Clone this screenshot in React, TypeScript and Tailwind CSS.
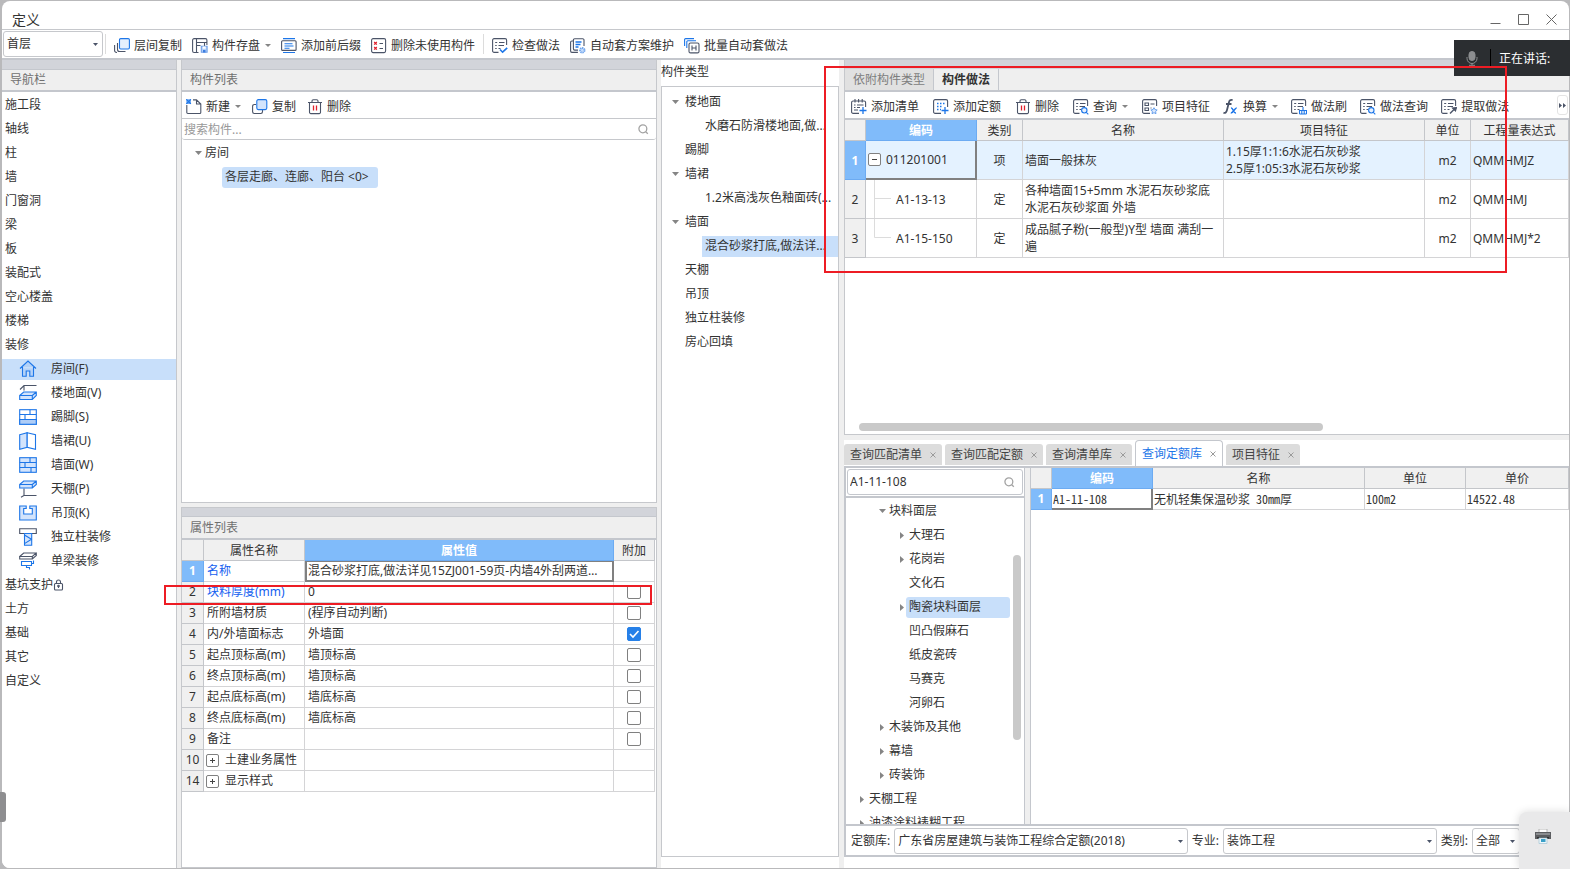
import type { ReactNode } from "react";

const D = "#4b5468";
const B = "#1d76e8";
const L = "#d3e4fc";

function Svg({ children, w = 16, h = 16 }: { children: ReactNode; w?: number; h?: number }) {
  return (
    <svg width={w} height={h} viewBox={`0 0 ${w} ${h}`} fill="none" stroke={D} strokeWidth="1.1" className="shrink-0" aria-hidden="true">
      {children}
    </svg>
  );
}

const Down = () => (
  <svg width="7" height="4" viewBox="0 0 7 4" className="shrink-0" aria-hidden="true">
    <path d="M0 0h7L3.5 4z" fill="#858585" />
  </svg>
);
const Right = () => (
  <svg width="4" height="7" viewBox="0 0 4 7" className="shrink-0" aria-hidden="true">
    <path d="M0 0v7L4 3.5z" fill="#858585" />
  </svg>
);
const SearchIcon = () => (
  <svg width="11" height="11" viewBox="0 0 12 12" fill="none" stroke="#a3a3a3" strokeWidth="1.4" className="shrink-0" aria-hidden="true">
    <circle cx="5.3" cy="5.3" r="4.3" />
    <path d="M8.4 8.4l2.3 2.3" />
  </svg>
);

const CopyFloors = () => (
  <Svg>
    <path d="M.6 7v5.500a2 2 0 0 0 2 2H3M3.5 5v6.500a2 2 0 0 0 2 2h6" />
    <rect x="5.500" y=".6" width="9.900" height="10.400" rx="1.200" fill="#e4effd" stroke={B} />
  </Svg>
);
const SaveComponent = () => (
  <Svg>
    <path d="M6.500 14.500H2.100A1.500 1.500 0 0 1 .600 13V2.100A1.500 1.500 0 0 1 2.100.600h11.300a1.500 1.500 0 0 1 1.500 1.500V7M4.500.600v13.900M4.500 4.500h10.400M4.500 7.500h4M12.500 4.500V8" />
    <path d="M9.300 8.300h5.800v6H9.300z" fill="#b5d2f9" stroke="#6f9fe8" />
    <path d="M10.700 8.500h3v2.300h-3z" fill="#fff" stroke="none" />
    <path d="M11 12h2.500v2.500H11z" fill="#3c7de0" stroke="none" />
  </Svg>
);
const Affix = () => (
  <Svg>
    <path d="M2 .600h12M2 14.500h12" stroke={B} />
    <rect x=".600" y="2.800" width="14.500" height="9.600" rx="1" />
    <path d="M3.500 5.700h8M3.500 8h9M3.500 10.300h5" stroke={B} />
  </Svg>
);
const RemoveUnused = () => (
  <Svg>
    <rect x=".600" y=".600" width="14" height="14" rx="1.500" />
    <path d="M3.200 4l2.600 2.600m0-2.600L3.200 6.600M3.200 9l2.600 2.600m0-2.600l-2.600 2.600" stroke="#e0202c" strokeWidth="1.300" />
    <path d="M8.500 5.500H12M8.500 10.500H12" />
  </Svg>
);
const DocFrame = () => (
  <path d="M6.500 14.400H2.100A1.500 1.500 0 0 1 .600 12.900V2.100A1.500 1.500 0 0 1 2.100.600h11a1.500 1.500 0 0 1 1.500 1.500V7M3.200 4.500h2M7 4.500h5.500M3.200 7.500h1.500M6.500 7.500h5.500M3.200 10.500h1.500M6.500 10.500h2" />
);
const CheckDoc = () => (
  <Svg>
    <DocFrame />
    <path d="M8 11.500l2.600 2.700 4.600-4.400" stroke={B} strokeWidth="1.600" />
  </Svg>
);
const AutoPlan = () => (
  <Svg>
    <path d="M3 3H1.900A1.300 1.300 0 0 0 .600 4.300v8.800a1.300 1.300 0 0 0 1.300 1.300h6M3.400 10.800V2a1.300 1.300 0 0 1 1.300-1.300h8A1.300 1.300 0 0 1 14 2v6M3.400 10.800a1.300 1.300 0 0 0 1.300 1.300H8" />
    <path d="M5.500 4h6M5.500 6.500h5M5.500 9h3" stroke={B} strokeWidth="1.300" />
    <circle cx="12.300" cy="12.300" r="2.300" fill="#c5dcfb" stroke="#6ea3ec" strokeWidth="1.800" strokeDasharray="1.300 .600" />
  </Svg>
);
const Batch = () => (
  <Svg>
    <path d="M.600 8V1.600a1 1 0 0 1 1-1H10M2.800 10V3.800a1 1 0 0 1 1-1H12" stroke={B} />
    <rect x="5" y="5" width="10" height="9.900" rx="1.500" />
    <path d="M8 7.500v5M12 7.500v5M8 10h4" />
  </Svg>
);
const NewIcon = () => (
  <Svg>
    <path d="M.800 6v7.500a1 1 0 0 0 1 1h12a1 1 0 0 0 1-1V5L10.500.900H7M10.500.900V5h4.300" />
    <path d="M.300.300h4.600v4.600H.300z" fill="#6aa6f2" stroke="none" />
    <path d="M.300.300l4.600 4.600M4.900.300L.300 4.900" stroke={B} />
  </Svg>
);
const CopyIcon = () => (
  <Svg>
    <path d="M4 5.500H2.300A1.700 1.700 0 0 0 .600 7.200v5.600a1.700 1.700 0 0 0 1.700 1.700h6.500a1.700 1.700 0 0 0 1.700-1.700V11" />
    <rect x="4.800" y=".600" width="10" height="10" rx="1.500" fill={L} stroke={B} />
  </Svg>
);
const Trash = () => (
  <Svg>
    <path d="M1 3.500h14M5 3.300V2A1.300 1.300 0 0 1 6.300.700h3.400A1.300 1.300 0 0 1 11 2v1.300M2.500 3.500v9.800a1.300 1.300 0 0 0 1.300 1.300h8.400a1.300 1.300 0 0 0 1.300-1.300V3.500" />
    <path d="M6.500 6.500v5M9.500 6.500v5" stroke="#e0202c" strokeWidth="1.300" />
  </Svg>
);
const AddList = () => (
  <Svg>
    <path d="M8 14.400H2.100A1.500 1.500 0 0 1 .600 12.900V3.500A1.500 1.500 0 0 1 2.100 2h11a1.500 1.500 0 0 1 1.500 1.500V8M4 0v3.500M7.600 0v3.500M11.200 0v3.500M3 6h1.500M6 6h6.500M3 8.500h1.500M6 8.500h3M3 11h4" />
    <path d="M8.500 11.500h7M12 8v7" stroke={B} strokeWidth="1.300" />
  </Svg>
);
const AddQuota = () => (
  <Svg>
    <path d="M8 14.400H2.100A1.500 1.500 0 0 1 .600 12.900V2.100A1.500 1.500 0 0 1 2.100.600h11a1.500 1.500 0 0 1 1.500 1.500V8" />
    <path d="M4 4.500h9M4 7.500h6M4 10.500h4" stroke={B} strokeDasharray="1.500 1.500" strokeWidth="1.400" />
    <path d="M8.500 11.500h7M12 8v7" stroke={B} strokeWidth="1.300" />
  </Svg>
);
const QueryDoc = () => (
  <Svg>
    <DocFrame />
    <circle cx="11.300" cy="11.300" r="2.700" fill="#e4effd" stroke={B} />
    <path d="M13.300 13.300l2 2" stroke={B} />
  </Svg>
);
const Feature = () => (
  <Svg>
    <path d="M8 14.400H2.100A1.500 1.500 0 0 1 .600 12.900V2.100A1.500 1.500 0 0 1 2.100.600h11a1.500 1.500 0 0 1 1.500 1.500V7M3 4h3.500v2.500H3zM3 9h3.500v2.500H3zM8.500 5h4M8.500 9h1" />
    <path d="M12 8.700l1 1.900 2.200.4-1.600 1.500.4 2.200-2-1-2 1 .4-2.200-1.600-1.500 2.200-.4z" fill="#d8e7fc" stroke="#5b97ea" strokeWidth=".900" />
  </Svg>
);
const Fx = () => (
  <Svg>
    <path d="M.500 13.600c1.800.900 2.900-.300 3.500-2.600l1.900-7.500C6.400 1.500 7.300.400 9.600 1.200M3 5h5.500" strokeWidth="1.800" />
    <path d="M8 9c2.300-.500 2.200 5.500 5 5M13.700 8.900c-2-.300-3.400 5.400-5.900 5.100" stroke={B} strokeWidth="1.500" />
  </Svg>
);
const BrushDoc = () => (
  <Svg>
    <DocFrame />
    <path d="M8.500 15v-3.500h7V15M12 8v3.500M10.800 12v3M13.200 12v3M8.500 15h7" stroke={B} />
  </Svg>
);
const ExtractDoc = () => (
  <Svg>
    <DocFrame />
    <path d="M9 14.500l4-4" strokeWidth="1.500" />
    <path d="M11.500 9l3 3 1-3.500z" fill={D} />
  </Svg>
);

const HomeIcon = () => (
  <Svg w={18} h={18}>
    <path d="M1 8.500L9 1l8 7.500M3.500 7v9.300h3.700V11h3.600v5.300h3.700V7" fill="#b4d2f8" stroke={B} />
  </Svg>
);
const FloorIcon = () => (
  <Svg w={18} h={18}>
    <path d="M17.500 1.500H5L1 5.500M5 1.500v5" />
    <path d="M.700 11.500l4-3.500H17.300v3.500l-4 4H.700zM.700 11.500h12.600v4M13.300 11.500l4-3.500" fill={L} stroke={B} />
  </Svg>
);
const Bricks = ({ full }: { full?: boolean }) => (
  <Svg w={18} h={18}>
    <rect x=".700" y="1.700" width="16.600" height="14.600" fill={full ? L : "#fff"} stroke={B} />
    {!full && <path d="M.700 11.500h16.600v4.800H.700z" fill="#aecdf7" stroke={B} />}
    <path d={full ? "M.700 6.500h16.600M.700 11.500h16.600M11 1.700v4.800M6 6.500v5M12 11.500v4.800" : "M.700 6.500h16.600M.700 11.500h16.600M11 1.700v4.800M6 6.500v5"} stroke={B} />
  </Svg>
);
const Wainscot = () => (
  <Svg w={18} h={18}>
    <path d="M.700 2.700l7.500-2v14.600l-7.500 2z" fill={L} stroke={B} />
    <path d="M8.200.700l8.300 2v14.600l-8.300-2z" fill="#fff" stroke={B} />
  </Svg>
);
const CeilingIcon = () => (
  <Svg w={18} h={18}>
    <path d="M17.500 15.500H5M5 8.500v7l-3 1.700" />
    <path d="M.700 4.500l4-3.500H17.300v3.500l-4 3.500H.700zM.700 4.500h12.600V8M13.300 4.500l4-3.500" fill={L} stroke={B} />
  </Svg>
);
const SuspendIcon = () => (
  <Svg w={18} h={18}>
    <path d="M.700 2h6.500v2.500H4.700V10h8.600V4.500h-2.500V2h6.500v14H.700z" fill={L} stroke={B} />
  </Svg>
);
const ColumnIcon = () => (
  <Svg w={18} h={18}>
    <path d="M.700.800h16.600v4.700H.700z" fill="#fff" />
    <path d="M5.500 5.500h7.200v11.800H5.500zM5.500 7l7 4.300-7 4.300" fill={L} stroke={B} />
  </Svg>
);
const BeamIcon = () => (
  <Svg w={18} h={18}>
    <path d="M.700 4.500l4-3.500H17.300l-4 3.500zM.700 4.500V7h12.600l4-3.500V1M13.300 4.500V7" />
    <path d="M2.500 9.500h10v4h-10zM12.500 11.500h2v-3M7.500 13.500v2h3v2" stroke={B} />
  </Svg>
);

function Tool({ icon, text, menu }: { icon: ReactNode; text: string; menu?: boolean }) {
  return (
    <button type="button" className="flex shrink-0 items-center gap-1 whitespace-nowrap">
      {icon}
      <span>{text}</span>
      {menu && (
        <span className="pl-px">
          <svg width="6" height="3" viewBox="0 0 6 3" aria-hidden="true">
            <path d="M0 0h6L3 3z" fill="#858585" />
          </svg>
        </span>
      )}
    </button>
  );
}

function Drop({ label, value, className }: { label: string; value: string; className: string }) {
  return (
    <div className={`relative h-[26px] ${className}`}>
      <select aria-label={label} className="h-full w-full appearance-none rounded-[3px] border border-[#c6c8cc] bg-white pl-[3px] pr-4 text-xs text-[#333]">
        <option>{value}</option>
      </select>
      <svg width="5" height="3" viewBox="0 0 5 3" className="pointer-events-none absolute right-[5px] top-3" aria-hidden="true">
        <path d="M0 0h5L2.500 3z" fill="#4b5468" />
      </svg>
    </div>
  );
}

const navTop = ["施工段", "轴线", "柱", "墙", "门窗洞", "梁", "板", "装配式", "空心楼盖", "楼梯", "装修"];
const navSub: [ReactNode, string][] = [
  [<HomeIcon />, "房间(F)"],
  [<FloorIcon />, "楼地面(V)"],
  [<Bricks />, "踢脚(S)"],
  [<Wainscot />, "墙裙(U)"],
  [<Bricks full />, "墙面(W)"],
  [<CeilingIcon />, "天棚(P)"],
  [<SuspendIcon />, "吊顶(K)"],
  [<ColumnIcon />, "独立柱装修"],
  [<BeamIcon />, "单梁装修"],
];
const navEnd = ["基坑支护", "土方", "基础", "其它", "自定义"];

function Nav() {
  return (
    <nav className="flex w-[175px] shrink-0 flex-col overflow-hidden border-r border-[#c6c8cc] bg-white">
      <div className="h-[9px] shrink-0 bg-[#d2d4da]" />
      <h2 className="flex h-[23px] shrink-0 items-center border-b-2 border-t border-b-[#c4c7cd] border-t-[#c4c7cd] bg-[#efefef] pl-2 text-[#6f6f6f]">导航栏</h2>
      <ul className="pt-px">
        {navTop.map((t) => (
          <li key={t} className="flex h-6 items-center pl-[3px]">{t}</li>
        ))}
        {navSub.map(([icon, t], i) => (
          <li key={t} className="flex h-6 items-center">
            <a href="#" className={`flex h-[21px] w-full items-center gap-[14px] pl-[17px] ${i === 0 ? "bg-[#c8dffa]" : ""}`}>
              {icon}
              {t}
            </a>
          </li>
        ))}
        {navEnd.map((t, i) => (
          <li key={t} className="flex h-6 items-center pl-[3px]">
            {t}
            {i === 0 && (
              <svg width="11" height="12" viewBox="0 0 11 12" fill="none" stroke={D} strokeWidth="1.100" aria-hidden="true">
                <rect x="1.500" y="4.500" width="8" height="6.500" rx="1" />
                <path d="M3.500 4.500V3a2 2 0 0 1 4 0v1.500M5.500 7v2" />
                <circle cx="5.500" cy="7" r=".800" />
              </svg>
            )}
          </li>
        ))}
      </ul>
    </nav>
  );
}

type Prop = { n: number; name: string; value: string; check?: boolean; blue?: boolean; group?: boolean };
const props: Prop[] = [
  { n: 1, name: "名称", value: "混合砂浆打底,做法详见15ZJ001-59页-内墙4外刮两道腻子", blue: true },
  { n: 2, name: "块料厚度(mm)", value: "0", check: false, blue: true },
  { n: 3, name: "所附墙材质", value: "(程序自动判断)", check: false },
  { n: 4, name: "内/外墙面标志", value: "外墙面", check: true },
  { n: 5, name: "起点顶标高(m)", value: "墙顶标高", check: false },
  { n: 6, name: "终点顶标高(m)", value: "墙顶标高", check: false },
  { n: 7, name: "起点底标高(m)", value: "墙底标高", check: false },
  { n: 8, name: "终点底标高(m)", value: "墙底标高", check: false },
  { n: 9, name: "备注", value: "", check: false },
  { n: 10, name: "土建业务属性", value: "", group: true },
  { n: 14, name: "显示样式", value: "", group: true },
];

const th = "border-b border-r border-[#c4c6ca] bg-[#f0f0f0] p-0 pt-px font-normal";
const thOn = "border-b border-r border-[#6cabf2] bg-[#80bbfa] p-0 pt-px font-bold text-white";
const numOn = "border-b border-r border-[#6cabf2] bg-[#80bbfa] p-0 text-center font-bold text-white";
const num = "border-b border-r border-[#c4c6ca] bg-[#f0f0f0] p-0 text-center font-normal";
const td = "border-b border-r border-[#d4d4d6] p-0";

function Toggle({ sign }: { sign: string }) {
  return (
    <button type="button" aria-label={sign === "+" ? "展开" : "收起"} className="flex h-[13px] w-[13px] shrink-0 items-center justify-center rounded-[2px] border border-[#808080] bg-white">
      <svg width="5" height="5" viewBox="0 0 5 5" stroke="#444" strokeWidth="1" aria-hidden="true">
        <path d={sign === "+" ? "M0 2.500h5M2.500 0v5" : "M0 2.500h5"} />
      </svg>
    </button>
  );
}

function PropertyTable() {
  return (
    <div className="pr-px">
      <table className="w-full table-fixed border-separate border-spacing-0">
        <colgroup>
          <col className="w-[22px]" />
          <col className="w-[101px]" />
          <col />
          <col className="w-[41px]" />
        </colgroup>
        <thead>
          <tr className="h-[21px]">
            <th className={th} />
            <th className={th}>属性名称</th>
            <th className={thOn}>属性值</th>
            <th className={th}>附加</th>
          </tr>
        </thead>
        <tbody>
          {props.map((p, i) => (
            <tr key={p.n} className="h-[21px]">
              <th scope="row" className={i === 0 ? numOn : num}>{p.n}</th>
              <td className={td}>
                <div className={`flex items-center whitespace-nowrap ${p.group ? "gap-[6px] pl-[2px]" : "pl-[3px]"} ${p.blue ? "text-[#1460f0]" : ""}`}>
                  {p.group && <Toggle sign="+" />}
                  {p.name}
                </div>
              </td>
              <td className={i === 0 ? "border-2 border-t border-[#808080] p-0" : td}>
                <div className={`truncate ${i === 0 ? "pl-px pr-2" : "pl-[3px]"}`}>{p.value}</div>
              </td>
              <td className={td}>
                {p.check !== undefined && (
                  <label className="relative mx-auto block h-[14px] w-[14px]">
                    <input type="checkbox" aria-label={p.name} defaultChecked={p.check} className="peer block h-[14px] w-[14px] appearance-none rounded-[2px] border border-[#808080] bg-white checked:border-[#2680e8] checked:bg-[#2680e8]" />
                    <svg width="14" height="14" viewBox="0 0 14 14" fill="none" stroke="#fff" strokeWidth="1.600" className="pointer-events-none absolute inset-0" aria-hidden="true">
                      <path d="M3 7l3 3 5.500-6" />
                    </svg>
                  </label>
                )}
              </td>
            </tr>
          ))}
        </tbody>
      </table>
    </div>
  );
}

function Components() {
  return (
    <div className="flex w-[476px] shrink-0 flex-col gap-1">
      <section className="flex flex-[443_1_443px] flex-col overflow-hidden border border-t-0 border-[#c6c8cc] bg-white">
        <div className="h-[9px] shrink-0 bg-[#d2d4da]" />
        <h2 className="flex h-[23px] shrink-0 items-center border-b-2 border-t border-[#c4c7cd] bg-[#efefef] pl-2 text-[#6f6f6f]">构件列表</h2>
        <div className="flex h-[27px] shrink-0 items-center gap-[11px] border-b border-[#c6c8cc] pl-[4px] pt-[3px]">
          <Tool icon={<NewIcon />} text="新建" menu />
          <Tool icon={<CopyIcon />} text="复制" />
          <Tool icon={<Trash />} text="删除" />
        </div>
        <div className="flex h-[21px] shrink-0 items-center rounded-[3px] border-b border-[#c6c8cc] pl-[2px] pr-[7px] pt-px">
          <input aria-label="搜索构件" placeholder="搜索构件..." className="min-w-0 flex-1 bg-transparent outline-none placeholder:text-[#999]" />
          <SearchIcon />
        </div>
        <ul className="pt-px">
          <li className="flex h-6 items-center gap-[3px] pl-[13px]">
            <Down />
            房间
          </li>
          <li className="flex h-6 items-center pl-10">
            <span className="flex h-[21px] items-center rounded-[3px] bg-[#c8dffa] pl-[3px] pr-[9px]">各层走廊、连廊、阳台 &lt;0&gt;</span>
          </li>
        </ul>
      </section>
      <section className="flex flex-[361_1_361px] flex-col overflow-hidden border border-[#c6c8cc] bg-white">
        <div className="h-2 shrink-0 bg-[#d2d4da]" />
        <h2 className="flex h-6 shrink-0 items-center border-b-2 border-t border-[#c4c7cd] bg-[#efefef] pl-2 text-[#6f6f6f]">属性列表</h2>
        <PropertyTable />
      </section>
    </div>
  );
}

const types: { t: string; open?: boolean; child?: boolean; on?: boolean }[] = [
  { t: "楼地面", open: true },
  { t: "水磨石防滑楼地面,做...", child: true },
  { t: "踢脚" },
  { t: "墙裙", open: true },
  { t: "1.2米高浅灰色釉面砖(...", child: true },
  { t: "墙面", open: true },
  { t: "混合砂浆打底,做法详...", child: true, on: true },
  { t: "天棚" },
  { t: "吊顶" },
  { t: "独立柱装修" },
  { t: "房心回填" },
];

function Types() {
  return (
    <section className="flex w-[178px] shrink-0 flex-col bg-white pb-[11px]">
      <h2 className="h-[26px] shrink-0 pt-1">构件类型</h2>
      <ul className="flex-1 overflow-hidden border border-[#c6c8cc] pt-[3px]">
        {types.map((r) =>
          r.child ? (
            <li key={r.t} className="flex h-6 items-center pl-10">
              <span className={`flex h-[21px] w-full items-center whitespace-nowrap pl-[3px] ${r.on ? "bg-[#c8dffa]" : ""}`}>{r.t}</span>
            </li>
          ) : (
            <li key={r.t} className="flex h-6 items-center pl-[10px]">
              <span className="w-[13px]">{r.open && <Down />}</span>
              {r.t}
            </li>
          )
        )}
      </ul>
    </section>
  );
}

const works = [
  { n: 1, code: "011201001", kind: "项", name: "墙面一般抹灰", feature: ["1.15厚1:1:6水泥石灰砂浆", "2.5厚1:05:3水泥石灰砂浆"], unit: "m2", expr: "QMMHMJZ" },
  { n: 2, code: "A1-13-13", kind: "定", name: "各种墙面15+5mm 水泥石灰砂浆底 水泥石灰砂浆面 外墙", feature: [], unit: "m2", expr: "QMMHMJ" },
  { n: 3, code: "A1-15-150", kind: "定", name: "成品腻子粉(一般型)Y型 墙面 满刮一遍", feature: [], unit: "m2", expr: "QMMHMJ*2" },
];

function Branch({ last }: { last: boolean }) {
  return (
    <svg width="26" height="38" viewBox="0 0 26 38" stroke="#dcdcdc" className="shrink-0" aria-hidden="true">
      <path d={last ? "M8.500 0v18.500H25" : "M8.500 0v38M8.500 18.500H25"} fill="none" />
    </svg>
  );
}

function Works() {
  return (
    <section className="flex flex-[375_1_375px] flex-col overflow-hidden border-b border-l border-[#c6c8cc] bg-white">
      <div className="h-[9px] shrink-0 bg-[#d2d4da]" />
      <div className="flex h-[23px] shrink-0 border-b-2 border-[#c4c7cd] bg-[#efefef]">
        <button type="button" className="w-[89px] border-r border-[#c4c7cd] bg-[#e1e1e1] text-[#7d7d7d]">依附构件类型</button>
        <button type="button" className="w-[65px] border-r border-[#c4c7cd] font-bold">构件做法</button>
      </div>
      <div className="flex h-[28px] shrink-0 items-center border-b-2 border-[#c4c7cd] pl-[6px] pr-px">
        <div className="flex min-w-0 flex-1 items-center gap-[14px] overflow-hidden pt-[3px]">
          <Tool icon={<AddList />} text="添加清单" />
          <Tool icon={<AddQuota />} text="添加定额" />
          <Tool icon={<Trash />} text="删除" />
          <Tool icon={<QueryDoc />} text="查询" menu />
          <div className="flex items-center gap-[13px]">
            <Tool icon={<Feature />} text="项目特征" />
            <Tool icon={<Fx />} text="换算" menu />
            <Tool icon={<BrushDoc />} text="做法刷" />
            <Tool icon={<QueryDoc />} text="做法查询" />
            <Tool icon={<ExtractDoc />} text="提取做法" />
          </div>
        </div>
        <button type="button" aria-label="更多" className="flex h-5 w-[11px] shrink-0 items-center justify-center rounded-[3px] border border-[#e4e4e4]">
          <svg width="7" height="5" viewBox="0 0 7 5" className="shrink-0" aria-hidden="true">
            <path d="M0 0v5l3-2.500zM4 0v5l3-2.500z" fill={D} />
          </svg>
        </button>
      </div>
      <table className="w-full table-fixed border-separate border-spacing-0">
        <colgroup>
          <col className="w-[21px]" />
          <col className="w-[111px]" />
          <col className="w-[46px]" />
          <col className="w-[201px]" />
          <col />
          <col className="w-[46px]" />
          <col className="w-[98px]" />
        </colgroup>
        <thead>
          <tr className="h-[21px]">
            <th className={th} />
            <th className={thOn}>编码</th>
            <th className={th}>类别</th>
            <th className={th}>名称</th>
            <th className={th}>项目特征</th>
            <th className={th}>单位</th>
            <th className={th}>工程量表达式</th>
          </tr>
        </thead>
        <tbody>
          {works.map((w, i) => (
            <tr key={w.n} className={`h-[39px] leading-[17px] ${i === 0 ? "bg-[#e4f2ff]" : ""}`}>
              <th scope="row" className={i === 0 ? numOn : num}>{w.n}</th>
              <td className={i === 0 ? "border-b-2 border-r-2 border-[#808080] p-0" : td}>
                {i === 0 ? (
                  <div className="flex items-center gap-[5px] pl-[2px]">
                    <Toggle sign="-" />
                    {w.code}
                  </div>
                ) : (
                  <div className="flex items-center gap-1">
                    <Branch last={i === 2} />
                    {w.code}
                  </div>
                )}
              </td>
              <td className={`${td} text-center`}>{w.kind}</td>
              <td className={`${td} pl-[2px]`}>{w.name}</td>
              <td className={`${td} pl-[2px]`}>
                {w.feature.map((f) => (
                  <div key={f}>{f}</div>
                ))}
              </td>
              <td className={`${td} text-center`}>{w.unit}</td>
              <td className={`${td} pl-[2px]`}>{w.expr}</td>
            </tr>
          ))}
        </tbody>
      </table>
      <div className="mt-auto px-[14px] pb-[3px]">
        <div className="h-2 w-2/3 rounded-full bg-[#c9c9c9]" />
      </div>
    </section>
  );
}

const tabs = ["查询匹配清单", "查询匹配定额", "查询清单库", "查询定额库", "项目特征"];

const library: { t: string; level: number; mark?: "open" | "shut"; on?: boolean }[] = [
  { t: "块料面层", level: 1, mark: "open" },
  { t: "大理石", level: 2, mark: "shut" },
  { t: "花岗岩", level: 2, mark: "shut" },
  { t: "文化石", level: 2 },
  { t: "陶瓷块料面层", level: 2, mark: "shut", on: true },
  { t: "凹凸假麻石", level: 2 },
  { t: "纸皮瓷砖", level: 2 },
  { t: "马赛克", level: 2 },
  { t: "河卵石", level: 2 },
  { t: "木装饰及其他", level: 1, mark: "shut" },
  { t: "幕墙", level: 1, mark: "shut" },
  { t: "砖装饰", level: 1, mark: "shut" },
  { t: "天棚工程", level: 0, mark: "shut" },
  { t: "油漆涂料裱糊工程", level: 0, mark: "shut" },
];
const indent = ["pl-[12px]", "pl-[32px]", "pl-[52px]"];
const mono = "font-['Noto_Sans_CJK_SC',monospace] [font-feature-settings:'hwid']";

function Library() {
  return (
    <section className="flex flex-[417_1_417px] flex-col overflow-hidden border-b-2 border-[#c4c7cd] bg-white">
      <div className="flex h-[28px] shrink-0 items-end gap-[3px] border-b-2 border-[#c4c7cd]">
        {tabs.map((t, i) => (
          <button
            key={t}
            type="button"
            className={
              i === 3
                ? "flex h-[26px] items-center gap-2 rounded-t-[4px] border border-b-0 border-[#c4c7cd] bg-white px-[6px] pt-px text-[#1d76e8]"
                : "mb-px flex h-[21px] items-center gap-2 rounded-t-[3px] bg-[#dcdcdc] px-[6px] pt-px text-[#444]"
            }
          >
            {t}
            <svg width="6" height="6" viewBox="0 0 6 6" stroke="#9a9a9a" aria-hidden="true">
              <path d="M.500.500l5 5M5.500.500l-5 5" />
            </svg>
          </button>
        ))}
      </div>
      <div className="flex min-h-0 flex-1 border-b-2 border-[#c4c7cd] bg-[#efefef]">
        <div className="flex w-[181px] shrink-0 flex-col border-l-2 border-r border-[#c4c7cd] bg-white">
          <div className="shrink-0 border-b-2 border-[#c4c7cd] p-px">
            <div className="flex h-[26px] items-center rounded-[3px] border border-[#c4c7cd] pl-[2px] pr-[7px]">
              <input aria-label="搜索定额" defaultValue="A1-11-108" className="min-w-0 flex-1 bg-transparent outline-none" />
              <SearchIcon />
            </div>
          </div>
          <div className="flex min-h-0 flex-1">
            <ul className="min-w-0 flex-1 overflow-hidden pt-px">
              {library.map((r) => (
                <li key={r.t} className={`flex h-6 items-center ${indent[r.level]}`}>
                  <span className="flex w-2 justify-center">{r.mark === "open" ? <Down /> : r.mark ? <Right /> : null}</span>
                  <span className={`flex h-[21px] items-center whitespace-nowrap rounded-[3px] pl-[3px] ${r.on ? "w-[104px] bg-[#c8dffa]" : ""}`}>{r.t}</span>
                </li>
              ))}
            </ul>
            <div className="w-[11px] shrink-0 pr-[3px] pt-[57px]">
              <div className="h-[185px] rounded-full bg-[#c9c9c9]" />
            </div>
          </div>
        </div>
        <div className="ml-[5px] flex-1 border-l border-[#c4c7cd] bg-white">
          <table className="w-full table-fixed border-separate border-spacing-0">
            <colgroup>
              <col className="w-[21px]" />
              <col className="w-[101px]" />
              <col />
              <col className="w-[101px]" />
              <col className="w-[103px]" />
            </colgroup>
            <thead>
              <tr className="h-[21px]">
                <th className={th} />
                <th className={thOn}>编码</th>
                <th className={th}>名称</th>
                <th className={th}>单位</th>
                <th className={th}>单价</th>
              </tr>
            </thead>
            <tbody>
              <tr className="h-[21px]">
                <th scope="row" className={numOn}>1</th>
                <td className={`border-b-2 border-r-2 border-[#808080] p-0 pl-px ${mono}`}>A1-11-108</td>
                <td className={`${td} pl-px ${mono}`}>无机轻集保温砂浆 30mm厚</td>
                <td className={`${td} pl-px ${mono}`}>100m2</td>
                <td className={`${td} pl-px ${mono}`}>14522.48</td>
              </tr>
            </tbody>
          </table>
        </div>
      </div>
      <div className="flex h-[29px] shrink-0 items-center gap-1 border-l-2 border-[#c4c7cd] pl-[5px] pr-[49px]">
        <span className="shrink-0">定额库:</span>
        <Drop label="定额库" value="广东省房屋建筑与装饰工程综合定额(2018)" className="min-w-0 flex-[294_1_0px]" />
        <span className="shrink-0">专业:</span>
        <Drop label="专业" value="装饰工程" className="min-w-0 flex-[214_1_0px]" />
        <span className="shrink-0">类别:</span>
        <Drop label="类别" value="全部" className="w-12 shrink-0" />
      </div>
    </section>
  );
}

export default function App() {
  return (
    <div className="relative flex h-screen flex-col overflow-hidden bg-[#b9b9bb] pb-px pl-[2px] pr-px pt-px font-['Noto_Sans','Noto_Sans_CJK_SC',sans-serif] text-xs leading-4 text-[#333]">
      <div className="flex min-h-0 flex-1 flex-col overflow-hidden rounded-[8px] bg-white">
        <header className="flex h-[29px] shrink-0 items-center justify-between border-b border-[#c6c8cc] pl-[10px] pr-3 pt-[9px]">
          <h1 className="text-sm">定义</h1>
          <div className="flex items-center gap-[17px]">
            {[
              ["最小化", "M.500 9.500h10"],
              ["最大化", "M.500.500h10v10H.500z"],
              ["关闭", "M.500.500l10 10M10.500.500l-10 10"],
            ].map(([label, d]) => (
              <button key={label} type="button" aria-label={label}>
                <svg width="11" height="11" viewBox="0 0 11 11" fill="none" stroke="#666" aria-hidden="true">
                  <path d={d} />
                </svg>
              </button>
            ))}
          </div>
        </header>
        <div className="flex h-[30px] shrink-0 items-center border-b-2 border-[#c4c7cd] pl-px">
          <Drop label="楼层" value="首层" className="w-[100px] shrink-0" />
          <div className="mx-[2px] h-5 w-px bg-[#dcdcdc]" />
          <div className="flex items-center gap-[10px] pl-[6px] pt-[3px]">
            <Tool icon={<CopyFloors />} text="层间复制" />
            <Tool icon={<SaveComponent />} text="构件存盘" menu />
            <Tool icon={<Affix />} text="添加前后缀" />
            <Tool icon={<RemoveUnused />} text="删除未使用构件" />
          </div>
          <div className="mx-2 h-5 w-px bg-[#dcdcdc]" />
          <div className="flex items-center gap-[10px] pt-[3px]">
            <Tool icon={<CheckDoc />} text="检查做法" />
            <Tool icon={<AutoPlan />} text="自动套方案维护" />
            <Tool icon={<Batch />} text="批量自动套做法" />
          </div>
        </div>
        <main className="flex min-h-0 flex-1 bg-[#efefef]">
          <Nav />
          <div className="w-1 shrink-0" />
          <Components />
          <div className="w-1 shrink-0" />
          <Types />
          <div className="w-[5px] shrink-0" />
          <div className="flex min-w-0 flex-1 flex-col">
            <Works />
            <div className="h-[5px] shrink-0" />
            <Library />
            <div className="h-[11px] shrink-0 bg-white" />
          </div>
        </main>
      </div>

      <div className="absolute right-0 top-10 flex h-9 w-[116px] items-center bg-[#2b2e31] text-white">
        <span className="flex w-9 justify-center">
          <svg width="12" height="15" viewBox="0 0 12 15" fill="none" stroke="#8c8e90" aria-hidden="true">
            <rect x="3" y=".500" width="6" height="9" rx="3" fill="#8c8e90" />
            <path d="M1 6v1.500a5 5 0 0 0 10 0V6M6 12.500V14M3 14.300h6" />
          </svg>
        </span>
        <span className="h-[18px] w-px bg-black" />
        <span className="pl-2 pt-px">正在讲话:</span>
      </div>
      <div className="pointer-events-none absolute left-[824px] top-[66px] h-[207px] w-[683px] border-2 border-[#ed1c24]" />
      <div className="pointer-events-none absolute left-[164px] top-[585px] h-5 w-[488px] border-2 border-[#ed1c24]" />
      <div className="absolute left-0 top-[792px] h-[30px] w-[6px] rounded-r-[3px] bg-[#8e8e90]" />
      <div className="absolute bottom-0 right-0 flex h-[57px] w-[51px] items-center justify-center rounded-tl-[8px] bg-[#e9e9ea] pb-2 pr-1 shadow-[0_0_8px_rgba(0,0,0,0.15)]">
        <svg width="16" height="15" viewBox="0 0 16 15" aria-hidden="true">
          <path d="M4 0h8v4H4z" fill="#fff" stroke="#b5b5b5" />
          <path d="M0 3h16v7H0z" fill="#5b5d60" />
          <path d="M1 4h14v2H1z" fill="#8a8c8f" />
          <path d="M2 8h12v1.500H2z" fill="#333" />
          <path d="M4 9h8v5.500H4z" fill="#eef7fb" stroke="#a9c9d8" strokeWidth=".800" />
          <path d="M6 10h4.500v3H6z" fill="#3aa0c8" />
        </svg>
      </div>
    </div>
  );
}
